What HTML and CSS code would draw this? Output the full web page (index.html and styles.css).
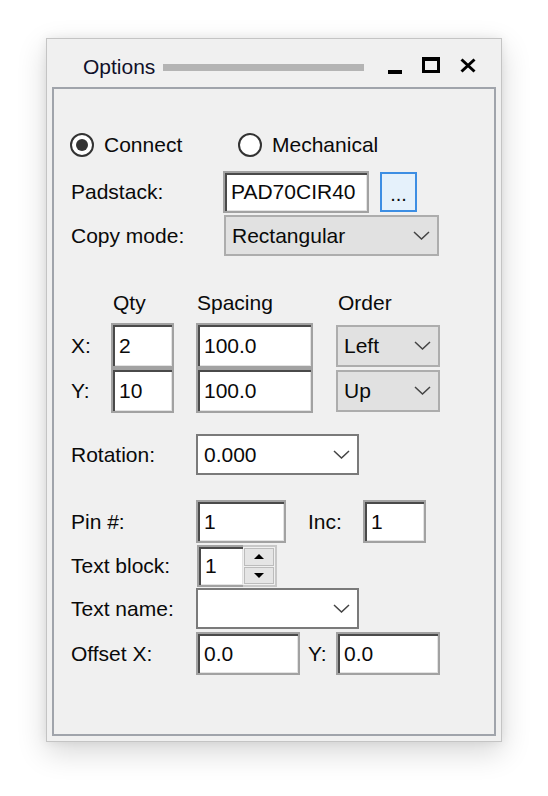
FILE: index.html
```html
<!DOCTYPE html>
<html>
<head>
<meta charset="utf-8">
<title>Options</title>
<link rel="stylesheet" href="styles.css">
</head>
<body>
<div class="window">
  <div class="titlebar">
    <span class="title">Options</span>
    <span class="grip"></span>
    <span class="tb-min"></span>
    <span class="tb-max"></span>
    <svg class="tb-close" width="16" height="15" viewBox="0 0 16 15"><path d="M1.5 1.5 L14.5 13.5 M14.5 1.5 L1.5 13.5" stroke="#000" stroke-width="3" fill="none"/></svg>
  </div>
  <div class="panel">
    <div class="row r-radio">
      <div class="radio on"><span class="circle"></span><span class="rtext">Connect</span></div>
      <div class="radio"><span class="circle"></span><span class="rtext">Mechanical</span></div>
    </div>
    <div class="row r-pad">
      <span class="lbl lbl-wide">Padstack:</span>
      <div class="edit w-pad">PAD70CIR40</div>
      <div class="browse">...</div>
    </div>
    <div class="row r-copy">
      <span class="lbl lbl-wide">Copy mode:</span>
      <div class="combo gray w-copy"><span>Rectangular</span><svg class="chev" width="17" height="9" viewBox="0 0 17 9"><path d="M1 1 L8.5 8 L16 1" stroke="#444" stroke-width="1.5" fill="none"/></svg></div>
    </div>
    <div class="row r-head">
      <span class="h-pad"></span>
      <span class="h-qty">Qty</span>
      <span class="h-spc">Spacing</span>
      <span class="h-ord">Order</span>
    </div>
    <div class="row r-xy">
      <span class="lbl lbl-xy">X:</span>
      <div class="edit w-qty">2</div>
      <div class="edit w-spc">100.0</div>
      <div class="combo gray w-ord"><span>Left</span><svg class="chev" width="17" height="9" viewBox="0 0 17 9"><path d="M1 1 L8.5 8 L16 1" stroke="#444" stroke-width="1.5" fill="none"/></svg></div>
    </div>
    <div class="row r-xy r-y">
      <span class="lbl lbl-xy">Y:</span>
      <div class="edit w-qty">10</div>
      <div class="edit w-spc">100.0</div>
      <div class="combo gray w-ord"><span>Up</span><svg class="chev" width="17" height="9" viewBox="0 0 17 9"><path d="M1 1 L8.5 8 L16 1" stroke="#444" stroke-width="1.5" fill="none"/></svg></div>
    </div>
    <div class="row r-rot">
      <span class="lbl">Rotation:</span>
      <div class="combo white w-rot"><span>0.000</span><svg class="chev" width="17" height="9" viewBox="0 0 17 9"><path d="M1 1 L8.5 8 L16 1" stroke="#444" stroke-width="1.5" fill="none"/></svg></div>
    </div>
    <div class="row r-pin">
      <span class="lbl">Pin #:</span>
      <div class="edit w-pin">1</div>
      <span class="lbl-inc">Inc:</span>
      <div class="edit w-inc">1</div>
    </div>
    <div class="row r-tb">
      <span class="lbl">Text block:</span>
      <div class="spin">
        <div class="edit spin-edit">1</div>
        <div class="spin-btns">
          <span class="sbtn"><span class="tri-up"></span></span>
          <span class="sbtn"><span class="tri-down"></span></span>
        </div>
      </div>
    </div>
    <div class="row r-tn">
      <span class="lbl">Text name:</span>
      <div class="combo white w-rot"><span></span><svg class="chev" width="17" height="9" viewBox="0 0 17 9"><path d="M1 1 L8.5 8 L16 1" stroke="#444" stroke-width="1.5" fill="none"/></svg></div>
    </div>
    <div class="row r-off">
      <span class="lbl">Offset X:</span>
      <div class="edit w-off">0.0</div>
      <span class="lbl-y">Y:</span>
      <div class="edit w-off">0.0</div>
    </div>
  </div>
</div>
</body>
</html>
```

FILE: styles.css
```css
* { box-sizing: border-box; }
html, body { margin: 0; padding: 0; background: #ffffff; }
body {
  width: 548px;
  height: 796px;
  overflow: hidden;
  font-family: "Liberation Sans", Arial, sans-serif;
  font-size: 21px;
  line-height: 24px;
  color: #0a0a0a;
}
.window {
  margin: 38px 0 0 46px;
  width: 456px;
  height: 704px;
  background: #f0f0f0;
  border: 1px solid #c4c4c4;
  box-shadow: 0 10px 28px rgba(0,0,0,0.16), 0 0 10px rgba(0,0,0,0.07);
  display: flex;
  flex-direction: column;
}
.titlebar {
  height: 48px;
  flex: none;
  display: flex;
  align-items: flex-start;
  padding-left: 36px;
}
.title { margin-top: 16px; width: 80px; color: #10102a; }
.grip { margin-top: 25px; width: 201px; height: 7px; background: #b4b4b4; }
.tb-min { margin-top: 31px; margin-left: 24px; width: 14px; height: 4px; background: #000; }
.tb-max {
  margin-top: 18px; margin-left: 20px; width: 18px; height: 16px;
  border: 3px solid #000; border-top-width: 4px;
}
.tb-close { margin-top: 19px; margin-left: 20px; display: block; }

.panel {
  flex: 1;
  margin: 0 5px 5px 5px;
  border: 2px solid #a0a4ab;
  display: flex;
  flex-direction: column;
  padding-left: 16px;
}
.row { display: flex; align-items: center; flex: none; }

.r-radio { margin-top: 44px; height: 24px; }
.radio { display: flex; align-items: center; }
.radio:first-child { width: 168px; }
.circle {
  width: 24px; height: 24px; border-radius: 50%;
  border: 2px solid #333; background: #fff;
  display: flex; align-items: center; justify-content: center;
  margin-right: 10px;
}
.radio.on .circle::after {
  content: ""; width: 12px; height: 12px; border-radius: 50%; background: #333;
}

.lbl { width: 126px; padding-left: 1px; }
.lbl-wide { width: 153px; }
.lbl-xy { width: 41px; }

.edit {
  height: 100%;
  background: #fff;
  border: 2px solid #a2a2a2;
  box-shadow: inset 2px 2px 0 #4a4a4a, inset -1px -1px 0 #e3e3e3;
  padding-left: 6px;
  display: flex;
  align-items: center;
}
.combo {
  display: flex;
  align-items: center;
  justify-content: space-between;
  padding: 0 7px 0 6px;
  height: 100%;
}
.combo.gray { background: #e1e1e1; border: 2px solid #adadad; }
.combo.white { background: #fff; border: 2px solid #7a7a7a; }
.chev { display: block; }

.r-pad { margin-top: 14px; height: 42px; }
.w-pad { width: 146px; }
.browse {
  margin-left: 11px; width: 37px; height: 40px;
  border: 2px solid #3d8ee3; background: #e5f1fb;
  display: flex; justify-content: center; align-items: center;
  font-size: 20px; padding-top: 4px;
}

.r-copy { margin-top: 2px; height: 41px; }
.w-copy { width: 215px; margin-left: 1px; }

.r-head { margin-top: 35px; height: 24px; }
.h-pad { width: 43px; }
.h-qty { width: 84px; }
.h-spc { width: 140px; }
.h-ord { padding-left: 1px; }

.r-xy { margin-top: 8px; height: 45px; }
.r-y { margin-top: 0; }
.w-qty { width: 63px; }
.w-spc { width: 117px; margin-left: 22px; }
.w-ord { width: 104px; height: 42px; margin-left: 23px; }

.r-rot { margin-top: 21px; height: 41px; }
.w-rot { width: 163px; }

.r-pin { margin-top: 25px; height: 43px; }
.w-pin { width: 90px; }
.lbl-inc { margin-left: 22px; width: 55px; }
.w-inc { width: 63px; }

.r-tb { margin-top: 2px; height: 42px; }
.spin { display: flex; height: 100%; margin-left: 1px; }
.spin-edit { width: 46px; border-right: none; }
.spin-btns {
  width: 34px; height: 100%;
  display: flex; flex-direction: column; gap: 1px;
  border: 2px solid #c8c8c8; border-left: none;
  padding: 1px;
  background: #f0f0f0;
}
.sbtn {
  flex: 1; background: #e5e5e5; border: 1px solid #bcbcbc;
  display: flex; align-items: center; justify-content: center;
}
.tri-up { width: 0; height: 0; border-left: 5px solid transparent; border-right: 5px solid transparent; border-bottom: 5px solid #000; }
.tri-down { width: 0; height: 0; border-left: 5px solid transparent; border-right: 5px solid transparent; border-top: 5px solid #000; }

.r-tn { margin-top: 1px; height: 41px; }

.r-off { margin-top: 3px; height: 43px; }
.w-off { width: 104px; }
.lbl-y { margin-left: 8px; width: 28px; }
```
